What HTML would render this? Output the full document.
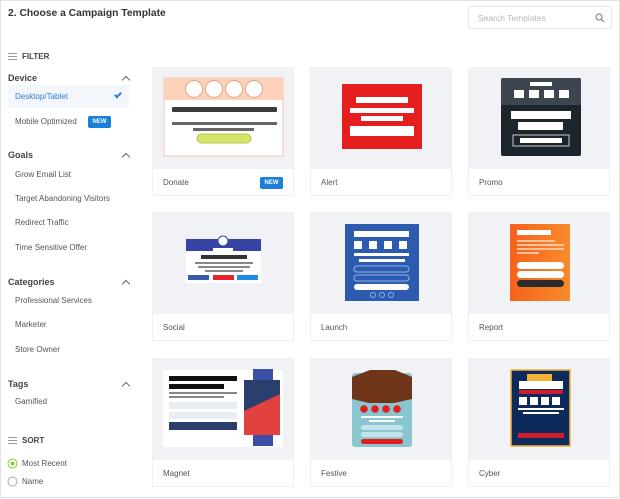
<!DOCTYPE html>
<html><head><meta charset="utf-8"><style>
*{margin:0;padding:0;box-sizing:border-box}
body{width:620px;height:499px;background:#fff;font-family:"Liberation Sans",sans-serif;position:relative;overflow:hidden;color:#444}
.frame{position:absolute;left:0;top:0;width:620px;height:498px;border:1px solid #e2e2e2}
.t{position:absolute;white-space:nowrap}
h1{position:absolute;left:8px;top:8px;font-size:10.3px;font-weight:bold;color:#333}
.search{position:absolute;left:468px;top:6px;width:144px;height:23px;border:1px solid #e6e6e6;border-radius:2px;font-size:8.5px;color:#b5b5b5;padding:6px 9px}
.h{font-size:9px;font-weight:bold;color:#444}
.i{font-size:8px;color:#555}
.car{position:absolute;left:123px;width:6px;height:6px;border-left:1.5px solid #666;border-top:1.5px solid #666;transform:rotate(45deg)}
.new{position:absolute;background:#1a7fd6;color:#fff;font-size:6px;font-weight:bold;border-radius:2px;text-align:center;line-height:12px;width:23px;height:12px}
.card{position:absolute;width:142px;height:129px;border:1px solid #f0f0f2;background:#fff}
.card .img{position:absolute;left:0;top:0;width:140px;height:101px;background:#f1f2f6}
.card .lb{position:absolute;left:10px;top:110px;font-size:8px;color:#555}
.card svg{position:absolute;left:0;top:0}
</style></head><body>
<div class="frame"></div>
<h1>2. Choose a Campaign Template</h1>
<div class="search">Search Templates
<svg style="position:absolute;right:6px;top:6px" width="10" height="10"><circle cx="4" cy="4" r="3" fill="none" stroke="#888" stroke-width="1.2"/><line x1="6.2" y1="6.2" x2="9" y2="9" stroke="#888" stroke-width="1.2"/></svg></div>

<svg class="t" style="left:8px;top:52px" width="10" height="9"><g stroke="#999" stroke-width="1"><line x1="0" y1="1.5" x2="9" y2="1.5"/><line x1="0" y1="4.5" x2="9" y2="4.5"/><line x1="0" y1="7.5" x2="9" y2="7.5"/></g></svg>
<div class="t h" style="left:22px;top:52px;font-size:8px">FILTER</div>
<div class="t h" style="left:8px;top:73px">Device</div><div class="car" style="top:77px"></div>
<div class="t" style="left:8px;top:85px;width:121px;height:23px;background:#f3f6fb"></div>
<div class="t i" style="left:15px;top:92px;color:#2f7dd4">Desktop/Tablet</div>
<div class="t" style="left:116px;top:91px;width:4px;height:7px;border-right:2px solid #2f7dd4;border-bottom:2px solid #2f7dd4;transform:rotate(45deg)"></div>
<div class="t i" style="left:15px;top:117px">Mobile Optimized</div><div class="new" style="left:88px;top:116px">NEW</div>
<div class="t h" style="left:8px;top:150px">Goals</div><div class="car" style="top:154px"></div>
<div class="t i" style="left:15px;top:170px">Grow Email List</div>
<div class="t i" style="left:15px;top:194px">Target Abandoning Visitors</div>
<div class="t i" style="left:15px;top:218px">Redirect Traffic</div>
<div class="t i" style="left:15px;top:243px">Time Sensitive Offer</div>
<div class="t h" style="left:8px;top:277px">Categories</div><div class="car" style="top:281px"></div>
<div class="t i" style="left:15px;top:296px">Professional Services</div>
<div class="t i" style="left:15px;top:320px">Marketer</div>
<div class="t i" style="left:15px;top:345px">Store Owner</div>
<div class="t h" style="left:8px;top:379px">Tags</div><div class="car" style="top:383px"></div>
<div class="t i" style="left:15px;top:397px">Gamified</div>
<svg class="t" style="left:8px;top:436px" width="10" height="9"><g stroke="#999" stroke-width="1"><line x1="0" y1="1.5" x2="9" y2="1.5"/><line x1="0" y1="4.5" x2="9" y2="4.5"/><line x1="0" y1="7.5" x2="9" y2="7.5"/></g></svg>
<div class="t h" style="left:22px;top:436px;font-size:8px">SORT</div>
<svg class="t" style="left:7px;top:458px" width="11" height="11"><circle cx="5.5" cy="5.5" r="4.5" fill="#fff" stroke="#8cc63f"/><circle cx="5.5" cy="5.5" r="2" fill="#8cc63f"/></svg>
<div class="t i" style="left:22px;top:459px">Most Recent</div>
<svg class="t" style="left:7px;top:476px" width="11" height="11"><circle cx="5.5" cy="5.5" r="4.5" fill="#fff" stroke="#aaa"/></svg>
<div class="t i" style="left:22px;top:477px">Name</div>

<div class="card" style="left:152px;top:67px"><div class="img"></div>
<svg width="142" height="101"><rect x="11" y="10" width="119" height="78" fill="#fff" stroke="#f5c4a8"/><rect x="11" y="10" width="119" height="22" fill="#fcd2bb"/>
<g fill="#fff" stroke="#eaa47e"><circle cx="41" cy="21" r="8.5"/><circle cx="61" cy="21" r="8.5"/><circle cx="81" cy="21" r="8.5"/><circle cx="101" cy="21" r="8.5"/></g>
<rect x="19" y="39" width="105" height="5" rx="1" fill="#3a3a3a"/><rect x="19" y="54" width="105" height="3" fill="#666"/><rect x="40" y="60" width="61" height="3" fill="#666"/><rect x="44" y="66" width="54" height="9" rx="4.5" fill="#d6e36a" stroke="#b8c64c"/></svg>
<div class="lb">Donate</div><div class="new" style="left:107px;top:109px">NEW</div></div>

<div class="card" style="left:310px;top:67px"><div class="img"></div>
<svg width="142" height="101"><rect x="31" y="16" width="80" height="65" fill="#e61e1e"/><g fill="#fff"><rect x="45" y="29" width="52" height="6"/><rect x="39" y="40" width="64" height="5"/><rect x="50" y="48" width="42" height="5"/><rect x="39" y="58" width="64" height="10"/></g></svg>
<div class="lb">Alert</div></div>

<div class="card" style="left:468px;top:67px"><div class="img"></div>
<svg width="142" height="101"><rect x="32" y="10" width="80" height="78" rx="2" fill="#1d252c"/><path d="M34 10h76a2 2 0 0 1 2 2v25h-80v-25a2 2 0 0 1 2-2z" fill="#3d4650"/><g fill="#fff"><rect x="61" y="14" width="22" height="4"/><rect x="45" y="22" width="10" height="8"/><rect x="60" y="22" width="10" height="8"/><rect x="75" y="22" width="10" height="8"/><rect x="90" y="22" width="10" height="8"/><rect x="42" y="43" width="60" height="8"/><rect x="49" y="54" width="45" height="8"/><rect x="51" y="70" width="42" height="5"/></g><rect x="44" y="67" width="56" height="11" fill="none" stroke="#ccc"/></svg>
<div class="lb">Promo</div></div>

<div class="card" style="left:152px;top:212px"><div class="img"></div>
<svg width="142" height="101"><rect x="33" y="26" width="75" height="44" fill="#fff"/><rect x="33" y="26" width="75" height="12" fill="#3645a3"/><circle cx="70" cy="28" r="5" fill="#fff" stroke="#3645a3"/><rect x="60" y="35" width="20" height="3" fill="#fff"/>
<rect x="48" y="42" width="46" height="4" fill="#333"/><g fill="#888"><rect x="42" y="49" width="58" height="2"/><rect x="45" y="53" width="52" height="2"/><rect x="52" y="57" width="38" height="2"/></g>
<rect x="35" y="62" width="21" height="5" fill="#3a5bab"/><rect x="60" y="62" width="21" height="5" fill="#e5262f"/><rect x="84" y="62" width="21" height="5" fill="#1c8de0"/></svg>
<div class="lb">Social</div></div>

<div class="card" style="left:310px;top:212px"><div class="img"></div>
<svg width="142" height="101"><rect x="34" y="11" width="74" height="77" fill="#2d5bb0"/><g fill="#fff"><rect x="43" y="18" width="55" height="6"/><rect x="43" y="28" width="8" height="8"/><rect x="58" y="28" width="8" height="8"/><rect x="73" y="28" width="8" height="8"/><rect x="88" y="28" width="8" height="8"/><rect x="43" y="40" width="55" height="3"/><rect x="48" y="46" width="46" height="3"/><rect x="43" y="71" width="55" height="6" rx="3"/></g>
<g fill="none" stroke="#8fb1e6"><rect x="43" y="53" width="55" height="6" rx="3"/><rect x="43" y="62" width="55" height="6" rx="3"/><circle cx="62" cy="82" r="2.5"/><circle cx="71" cy="82" r="2.5"/><circle cx="80" cy="82" r="2.5"/></g></svg>
<div class="lb">Launch</div></div>

<div class="card" style="left:468px;top:212px"><div class="img"></div>
<svg width="142" height="101"><defs><linearGradient id="og" x1="0" x2="1"><stop offset="0" stop-color="#f5621c"/><stop offset="1" stop-color="#f98b2c"/></linearGradient></defs><rect x="41" y="11" width="60" height="77" fill="url(#og)"/><g fill="#fff"><rect x="48" y="17" width="34" height="5"/></g><g fill="#fcc39d"><rect x="48" y="27" width="38" height="2"/><rect x="48" y="31" width="47" height="2"/><rect x="48" y="35" width="47" height="2"/><rect x="48" y="39" width="22" height="2"/></g><g fill="#fff"><rect x="48" y="49" width="47" height="7" rx="3.5"/><rect x="48" y="58" width="47" height="7" rx="3.5"/></g><rect x="48" y="67" width="47" height="7" rx="3.5" fill="#2b2b2b"/></svg>
<div class="lb">Report</div></div>

<div class="card" style="left:152px;top:358px"><div class="img"></div>
<svg width="142" height="101"><rect x="10" y="11" width="120" height="77" fill="#fff"/><g fill="#111"><rect x="16" y="17" width="68" height="5"/><rect x="16" y="25" width="55" height="5"/></g><g fill="#888"><rect x="16" y="33" width="68" height="2"/><rect x="16" y="37" width="55" height="2"/></g><g fill="#e8ecf3"><rect x="16" y="43" width="68" height="7"/><rect x="16" y="53" width="68" height="7"/></g><rect x="16" y="63" width="68" height="8" fill="#2b3f6e"/>
<rect x="100" y="10" width="20" height="11" fill="#3a4fa5"/><rect x="100" y="76" width="20" height="11" fill="#3a4fa5"/><rect x="91" y="21" width="36" height="55" fill="#e34040"/><path d="M91 21h36v14l-36 17z" fill="#2b3f6e"/></svg>
<div class="lb">Magnet</div></div>

<div class="card" style="left:310px;top:358px"><div class="img"></div>
<svg width="142" height="101"><rect x="41" y="14" width="60" height="74" rx="3" fill="#8ac6cf"/><path d="M41 18l18-7h25l17 7v22l-18 4h-25l-17-4z" fill="#6e3519"/>
<g fill="#e01e1e"><circle cx="53" cy="50" r="3.8"/><circle cx="64" cy="50" r="3.8"/><circle cx="75" cy="50" r="3.8"/><circle cx="86" cy="50" r="3.8"/><rect x="50" y="80" width="42" height="5" rx="2.5"/></g><g fill="#fff"><rect x="50" y="57" width="42" height="2"/><rect x="58" y="61" width="26" height="2"/></g><g fill="#c3e4ea"><rect x="50" y="66" width="42" height="5" rx="2.5"/><rect x="50" y="73" width="42" height="5" rx="2.5"/></g></svg>
<div class="lb">Festive</div></div>

<div class="card" style="left:468px;top:358px"><div class="img"></div>
<svg width="142" height="101"><rect x="42" y="11" width="59" height="76" fill="#0d2a5c" stroke="#f2b234" stroke-width="1.5"/><rect x="58" y="15" width="25" height="8" fill="#f2b234"/><rect x="50" y="22" width="44" height="8" fill="#fff"/><rect x="50" y="31" width="44" height="4" fill="#d01e2e"/><g fill="#fff"><rect x="50" y="38" width="8" height="8"/><rect x="61" y="38" width="8" height="8"/><rect x="72" y="38" width="8" height="8"/><rect x="83" y="38" width="8" height="8"/><rect x="49" y="49" width="46" height="2"/><rect x="54" y="53" width="36" height="2"/></g><rect x="49" y="74" width="46" height="5" fill="#d01e2e"/></svg>
<div class="lb">Cyber</div></div>
</body></html>
